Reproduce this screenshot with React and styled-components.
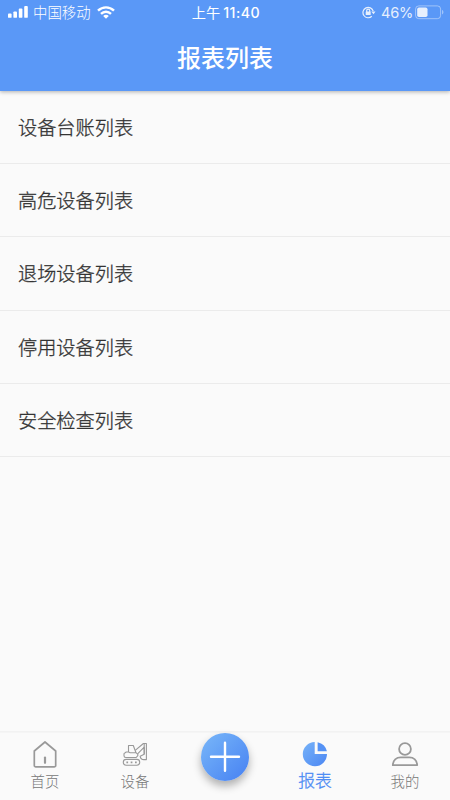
import styled, { createGlobalStyle, css } from 'styled-components'

const GlobalStyle = createGlobalStyle`
  * {
    box-sizing: border-box;
  }

  body {
    margin: 0;
    background: #fafafa;
    font-family: Inter, 'Noto Sans CJK SC', sans-serif;
  }
`

const Page = styled.div`
  height: 800px;
  display: flex;
  flex-direction: column;
  overflow: hidden;
  background: #fafafa;
`

const Header = styled.header`
  height: 91px;
  flex: none;
  color: #fff;
  background: #5a98f7;
  box-shadow: 0 1px 4px rgba(0, 0, 0, 0.3);
`

const StatusBar = styled.div`
  height: 24px;
  padding: 0 6px 0 8px;
  display: grid;
  grid-template-columns: 1fr auto 1fr;
  align-items: center;
  font-size: 14.4px;
  line-height: 24px;
`

const StatusGroup = styled.div`
  display: flex;
  align-items: center;
  justify-content: ${({ $end }) => ($end ? 'flex-end' : 'flex-start')};
  opacity: ${({ $end }) => ($end ? 0.85 : 1)};
`

const Carrier = styled.span`
  margin: 0 6px 0 5px;
  padding-top: 1px;
  font-weight: 300;
`

const Clock = styled.span`
  display: flex;
  gap: 3px;
  padding-top: 1px;
  font-size: 14.2px;
  font-weight: 400;
`

const Digits = styled.span`
  font-weight: 500;
  letter-spacing: 0.5px;
`

const Percent = styled.span`
  margin: 0 2px 0 5px;
  padding-top: 1px;
  font-size: 14.6px;
  letter-spacing: -0.3px;
`

const Title = styled.h1`
  margin: 0;
  height: 67px;
  padding-top: 1px;
  font-size: 24px;
  font-weight: 500;
  line-height: 67px;
  text-align: center;
`

const List = styled.ul`
  flex: 1;
  margin: 0;
  padding: 0;
  list-style: none;
`

const Item = styled.li`
  height: 73.2px;
  padding: 0 18px;
  display: flex;
  align-items: center;
  font-size: 19.2px;
  font-weight: 300;
  color: #333;
  -webkit-text-stroke: 0.3px #333;
  border-bottom: 1px solid #ebebeb;
`

const TabBar = styled.nav`
  height: 69px;
  flex: none;
  display: grid;
  grid-template-columns: repeat(5, 1fr);
  border-top: 1px solid #f2f2f2;
  box-shadow: inset 0 1px 0 #f5f5f5;
`

const Tab = styled.a`
  display: flex;
  flex-direction: column;
  align-items: center;
  padding-top: 8px;
  font-size: 14.4px;
  font-weight: 300;
  line-height: 20px;
  color: #777;

  svg {
    flex: none;
    margin-bottom: 4px;
  }

  ${({ $active }) =>
    $active &&
    css`
      font-size: 16.8px;
      line-height: 18px;
      color: #4a8af4;
      -webkit-text-stroke: 0.3px #4a8af4;
    `}
`

const AddButton = styled.button`
  width: 48px;
  height: 48px;
  margin: 1px auto 0;
  padding: 0;
  display: flex;
  align-items: center;
  justify-content: center;
  border: 0;
  border-radius: 50%;
  background: linear-gradient(135deg, #74b2f8 10%, #4b86f3 90%);
  box-shadow: 0 5px 9px rgba(0, 0, 0, 0.3);
`

const SignalIcon = () => (
  <svg width="20" height="13" viewBox="0 0 20 13" fill="#fff">
    <rect x="0" y="7.6" width="3.6" height="4.2" rx="0.9" />
    <rect x="5.4" y="5.4" width="3.6" height="6.4" rx="0.9" />
    <rect x="10.8" y="2.6" width="3.6" height="9.2" rx="0.9" />
    <rect x="16.2" y="0" width="3.6" height="11.8" rx="0.9" />
  </svg>
)

const WifiIcon = () => (
  <svg width="18" height="14" viewBox="0 0 18 14" fill="none" stroke="#fff" strokeWidth="2.4">
    <path d="M1 4.7C5.6.2 12.4.2 17 4.7" />
    <path d="M4 7.9c2.9-2.9 7.1-2.9 10 0" />
    <path d="M9 12.7 6.2 9.9c1.6-1.5 4-1.5 5.6 0z" fill="#fff" stroke="none" />
  </svg>
)

const LockIcon = () => (
  <svg width="14" height="13" viewBox="0 0 14 13" fill="none" stroke="#fff" strokeWidth="1.2">
    <path d="M9.8 10.3A5.2 5.2 0 1 1 11.2 5.2" />
    <path d="M9.3 5.4h4.2l-2 2.8z" fill="#fff" stroke="none" />
    <rect x="3.7" y="5.5" width="5" height="3.6" rx="0.5" fill="#fff" stroke="none" />
    <path d="M4.7 6V4.6a1.5 1.5 0 0 1 3 0V6" />
  </svg>
)

const BatteryIcon = () => (
  <svg width="29" height="16" viewBox="0 0 29 16" fill="#fff">
    <rect x="0.6" y="0.9" width="25" height="12.8" rx="3.2" fill="none" stroke="#fff" strokeOpacity="0.5" />
    <rect x="2.2" y="2.5" width="10.3" height="9.6" rx="1.8" />
    <path d="M27 5.1c1.9.6 1.9 3.8 0 4.4z" opacity="0.5" />
  </svg>
)

const HomeIcon = () => (
  <svg width="26" height="28" viewBox="0 0 26 28" fill="none" stroke="#999" strokeWidth="1.7" strokeLinejoin="round">
    <path d="M2.3 11 13 2 23.7 11v14.4a1.5 1.5 0 0 1-1.5 1.5H3.8a1.5 1.5 0 0 1-1.5-1.5z" />
    <path d="M13 17.5v5.3" strokeWidth="2.2" strokeLinecap="round" />
  </svg>
)

const ExcavatorIcon = () => (
  <svg width="26" height="28" viewBox="0 0 26 28" fill="none" stroke="#999" strokeWidth="1.1" strokeLinejoin="round">
    <path d="M6.5 12V5.5h4.8l2.7 7.2M6.5 12H4.2L2 13.6v2.2c0 1 .6 1.7 1.7 1.7h10.5l1.6-1.8v-1.4L14 12.7H8.2L6.5 12" />
    <path d="m13.2 10.3 8.2-6.8h3v16.1h-2.6c-2 0-3.3-1.3-3.6-3.3l4-2V7.2l-6.6 6.6" />
    <path d="M22.2 14.3V3.6" />
    <rect x="1.3" y="19.4" width="16.4" height="5.8" rx="2.9" />
    <path d="M4.4 22.3h1.7M8.7 22.3h1.7M13 22.3h1.7" strokeWidth="1.7" />
  </svg>
)

const PieIcon = () => (
  <svg width="26" height="28" viewBox="0 0 26 28">
    <defs>
      <linearGradient id="pie" x1="0" y1="0" x2="1" y2="1">
        <stop offset="0" stopColor="#77b3f8" />
        <stop offset="1" stopColor="#4b86f3" />
      </linearGradient>
    </defs>
    <path d="M12.7 2v12.1H25A12.1 12.1 0 1 1 12.7 2z" fill="url(#pie)" />
    <path d="M15.6 2.2A12 12 0 0 1 24.9 11.3H15.6z" fill="#5592f5" />
  </svg>
)

const UserIcon = () => (
  <svg width="28" height="28" viewBox="0 0 28 28" fill="none" stroke="#999" strokeWidth="1.8" strokeLinejoin="round">
    <circle cx="14" cy="9" r="5.9" />
    <path d="M1.8 25.2c.3-4.8 3.5-7.8 8-7.8h8.4c4.5 0 7.7 3 8 7.8z" />
  </svg>
)

const PlusIcon = () => (
  <svg width="32" height="32" viewBox="0 0 32 32" stroke="#fff" strokeWidth="2.4" strokeLinecap="round">
    <path d="M16 1.7v28M2 15.7h28" />
  </svg>
)

const REPORTS = ['设备台账列表', '高危设备列表', '退场设备列表', '停用设备列表', '安全检查列表']

const App = () => (
  <Page>
    <GlobalStyle />
    <Header>
      <StatusBar>
        <StatusGroup>
          <SignalIcon />
          <Carrier>中国移动</Carrier>
          <WifiIcon />
        </StatusGroup>
        <Clock>
          上午 <Digits>11:40</Digits>
        </Clock>
        <StatusGroup $end>
          <LockIcon />
          <Percent>46%</Percent>
          <BatteryIcon />
        </StatusGroup>
      </StatusBar>
      <Title>报表列表</Title>
    </Header>
    <List>
      {REPORTS.map((name) => (
        <Item key={name}>{name}</Item>
      ))}
    </List>
    <TabBar>
      <Tab>
        <HomeIcon />
        首页
      </Tab>
      <Tab>
        <ExcavatorIcon />
        设备
      </Tab>
      <AddButton aria-label="新增">
        <PlusIcon />
      </AddButton>
      <Tab $active>
        <PieIcon />
        报表
      </Tab>
      <Tab>
        <UserIcon />
        我的
      </Tab>
    </TabBar>
  </Page>
)

export default App
